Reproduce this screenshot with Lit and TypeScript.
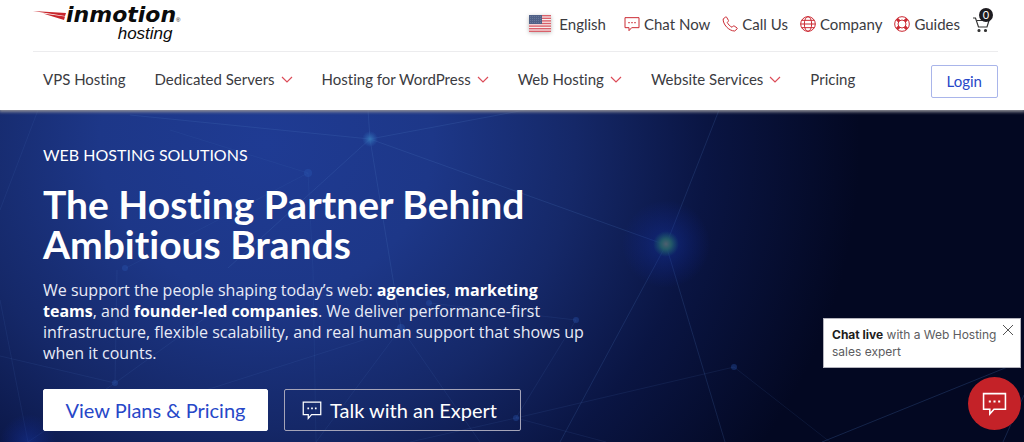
import { LitElement, html, css, svg } from "lit";
import { customElement, state } from "lit/decorators.js";

const bubble = (cls: string) => html`
  <svg class=${cls} viewBox="0 0 24 24" fill="none" stroke="currentColor" stroke-width="1.5" aria-hidden="true">
    <path d="M1.5 2.5h21v15H11.500L7.500 22v-4.500h-6z" />
    <path d="M6.500 10h2M11 10h2M15.500 10h2" stroke-width="2" />
  </svg>`;

const phone = html`
  <svg class="icon" viewBox="0 0 24 24" fill="none" stroke="currentColor" stroke-width="1.500" aria-hidden="true">
    <path d="M5.500 1.500 1.800 4.400C1 12 10 22.500 19 22.500l3.700-3.200c.4-.5.300-1-.2-1.400l-4.300-3c-.5-.3-1-.2-1.400.2l-1.700 1.800C12 15.500 9 12.300 7.900 9.600l1.600-1.700c.4-.4.400-.9.100-1.400L6.900 1.800c-.3-.5-.9-.7-1.400-.3z" />
  </svg>`;

const globe = html`
  <svg class="icon" viewBox="0 0 24 24" fill="none" stroke="currentColor" stroke-width="1.500" aria-hidden="true">
    <circle cx="12" cy="12" r="11" />
    <ellipse cx="12" cy="12" rx="5.500" ry="11" />
    <path d="M1 12h22M2.500 6.500h19M2.500 17.500h19" />
  </svg>`;

const lifebuoy = html`
  <svg class="icon" viewBox="0 0 24 24" fill="none" stroke="currentColor" stroke-width="1.500" aria-hidden="true">
    <circle cx="12" cy="12" r="11" />
    <circle cx="12" cy="12" r="6" />
    <path d="m4.500 4.500 3.500 3.500M19.500 4.500 16 8M4.500 19.500 8 16M19.500 19.500 16 16" stroke-width="4.500" />
  </svg>`;

const cart = html`
  <svg class="cart-icon" viewBox="0 0 18 18" fill="none" stroke="#333" stroke-width="1.200" aria-hidden="true">
    <path d="M1 3h2.500l3 9h8.500l2-6.500H5" />
    <circle cx="7" cy="15.500" r="1" fill="#333" />
    <circle cx="13.500" cy="15.500" r="1" fill="#333" />
  </svg>`;

const chevron = html`
  <svg class="chevron" viewBox="0 0 12 7" fill="none" stroke="currentColor" stroke-width="1.200" aria-hidden="true">
    <path d="m1 1 5 5 5-5" />
  </svg>`;

const flag = html`
  <svg class="flag" viewBox="0 0 22 17" aria-hidden="true">
    <rect width="22" height="17" fill="#f7eeee" />
    ${[0, 1, 2, 3, 4, 5, 6].map((i) => svg`<rect y=${i * 2.6} width="22" height="1.400" fill="#d9606a" />`)}
    <rect width="13" height="9" fill="#506187" />
    ${[1, 3, 5, 7].map((y) => svg`<path d="M1 ${y + 0.5}h11" stroke="#8491ad" stroke-width=".6" stroke-dasharray=".8 1.200" />`)}
  </svg>`;

@customElement("app-root")
export class AppRoot extends LitElement {
  @state() private noteOpen = true;

  static styles = css`
    :host {
      display: block;
      font-family: Lato, "Liberation Sans", sans-serif;
      font-variant-ligatures: none;
      color: #3b3b3f;
    }
    * { box-sizing: border-box; }
    a { color: inherit; text-decoration: none; }
    svg { flex: none; display: block; }
    button { font: inherit; cursor: pointer; }

    header { position: relative; z-index: 1; background: #fff; box-shadow: 0 1px 3px 1px #8d8d96; }
    .topbar {
      display: flex;
      justify-content: space-between;
      height: 52px;
      margin: 0 26px 0 33px;
      border-bottom: 1px solid #ececee;
    }
    .logo { display: flex; align-items: flex-start; padding-top: 5px; color: #0b0b0b; font-style: italic; }
    .swoosh { width: 33px; height: 9px; margin-top: 6px; }
    .words { display: flex; flex-direction: column; align-items: flex-end; }
    .brand { display: flex; align-items: flex-end; font: italic bold 22px/20px "DejaVu Sans", sans-serif; }
    .brand small { font: 6px/10px "Liberation Sans", sans-serif; }
    .sub { font: italic 17px/17px "Liberation Sans", sans-serif; padding-right: 8px; }

    .tools { display: flex; align-items: center; gap: 12px; padding: 0 8px 4px 0; font-size: 15px; }
    .tools a { display: flex; align-items: center; gap: 4px; }
    .tools .lang { gap: 8px; margin-right: 6px; }
    .flag { width: 22px; height: 17px; box-shadow: 0 1px 4px #bbb; }
    .icon { width: 16px; height: 16px; color: #cb2a33; }
    .cart { position: relative; }
    .cart-icon { width: 18px; height: 18px; }
    .badge {
      position: absolute;
      top: -7px;
      right: -3px;
      width: 14px;
      height: 14px;
      border-radius: 50%;
      background: #1d1b20;
      color: #fff;
      font-size: 11px;
      line-height: 14px;
      text-align: center;
    }

    nav { display: flex; align-items: center; justify-content: space-between; height: 58px; padding: 0 26px 0 43px; }
    .menu { display: flex; gap: 29px; margin: 0; padding: 0 0 4px; list-style: none; font-size: 15px; }
    .menu a { display: flex; align-items: center; gap: 6px; white-space: nowrap; }
    .chevron { width: 12px; height: 7px; color: #dc4c58; }
    .login {
      padding: 0 15px;
      border: 1px solid #a9b5ea;
      border-radius: 2px;
      color: #2747c8;
      font-size: 15px;
      line-height: 31px;
    }

    .hero {
      position: relative;
      min-height: 332px;
      padding: 34px 43px 11px;
      overflow: hidden;
      color: #fff;
      background:
        radial-gradient(ellipse 58% 165% at 26% 10%, #1f3b93 0%, #1d3788 28%, #152868 52%, #0a1543 74%, #030822 100%);
    }
    .mesh { position: absolute; inset: 0; width: 100%; height: 100%; }
    .copy { position: relative; display: flex; flex-direction: column; align-items: flex-start; }
    .eyebrow { margin: 0; font-size: 16px; line-height: 22px; }
    h1 { margin: 18px 0 0; font-size: 39px; line-height: 40px; font-weight: 700; }
    .lead { margin: 16px 0 0; font-family: "Open Sans", sans-serif; font-size: 16px; line-height: 21px; color: #e8ebf7; }
    .lead strong { color: #fff; }
    .actions { display: flex; gap: 16px; margin-top: 25px; }
    .btn {
      display: flex;
      align-items: center;
      justify-content: center;
      gap: 8px;
      min-width: 225px;
      height: 42px;
      padding: 0 23px 0 17px;
      border: 1px solid #a5a4b8;
      border-radius: 2px;
      font-size: 20px;
    }
    .btn.primary { padding: 0 20px; border-color: #fff; background: #fff; color: #2747c8; }
    .btn-icon { width: 20px; height: 20px; }

    .chat { position: fixed; right: 3px; bottom: 12px; z-index: 2; display: flex; flex-direction: column; align-items: flex-end; gap: 9px; }
    .note {
      display: flex;
      align-items: flex-start;
      width: 198px;
      padding: 7px 7px 7px 8px;
      border: 1px solid #b4b4bd;
      background: #fff;
      color: #5c5c60;
      font: 12px/17px Inter, sans-serif;
    }
    .note p { flex: 1; margin: 0; }
    .note strong { color: #1d1d20; }
    .close { width: 10px; height: 10px; margin-top: -1px; padding: 0; border: 0; background: none; color: #555; }
    .fab {
      display: grid;
      place-items: center;
      width: 53px;
      height: 53px;
      padding: 0;
      border: 0;
      border-radius: 50%;
      background: #c42228;
      color: #fff;
    }
    .fab-icon { width: 25px; height: 25px; }
  `;

  private menuItem(label: string, sub = false) {
    return html`<li><a href="#">${label}${sub ? chevron : null}</a></li>`;
  }

  render() {
    return html`
      <header>
        <div class="topbar">
          <a class="logo" href="#" aria-label="InMotion Hosting">
            <svg class="swoosh" viewBox="0 0 33 9" aria-hidden="true">
              <path d="M0 0 33 2 32 5z" fill="#c8262c" />
              <path d="M10 2.500 32 5.500 31 9z" fill="#c8262c" />
            </svg>
            <span class="words">
              <span class="brand">inmotion<small>®</small></span>
              <span class="sub">hosting</span>
            </span>
          </a>
          <div class="tools">
            <a class="lang" href="#">${flag}English</a>
            <a href="#">${bubble("icon")}Chat Now</a>
            <a href="#">${phone}Call Us</a>
            <a href="#">${globe}Company</a>
            <a href="#">${lifebuoy}Guides</a>
            <a class="cart" href="#" aria-label="Cart">${cart}<span class="badge">0</span></a>
          </div>
        </div>
        <nav>
          <ul class="menu">
            ${this.menuItem("VPS Hosting")}
            ${this.menuItem("Dedicated Servers", true)}
            ${this.menuItem("Hosting for WordPress", true)}
            ${this.menuItem("Web Hosting", true)}
            ${this.menuItem("Website Services", true)}
            ${this.menuItem("Pricing")}
          </ul>
          <a class="login" href="#">Login</a>
        </nav>
      </header>

      <section class="hero">
        <svg class="mesh" viewBox="0 0 1024 332" preserveAspectRatio="xMinYMin slice" aria-hidden="true">
          <defs>
            <radialGradient id="glow">
              <stop offset="0" stop-color="#1635a0" stop-opacity=".5" />
              <stop offset="1" stop-color="#1028a0" stop-opacity="0" />
            </radialGradient>
            <radialGradient id="core">
              <stop offset="0" stop-color="#4d6070" />
              <stop offset=".4" stop-color="#245a68" />
              <stop offset="1" stop-color="#14506a" stop-opacity="0" />
            </radialGradient>
            <radialGradient id="star">
              <stop offset="0" stop-color="#3473b4" />
              <stop offset="1" stop-color="#2a62b4" stop-opacity="0" />
            </radialGradient>
          </defs>
          <g fill="none" stroke="#4f7fc4" stroke-opacity=".2">
            <path d="M368 0 370 29 525 0M370 29 130 5M370 29 666 135M370 29 228 158M370 29 401 218M666 135 719 0M666 135 560 332M666 135 725 332" />
            <path d="M308 63 170 20M308 63 126 158M308 63 313 160 316 332" stroke-opacity=".1" />
            <path d="M38 0 0 100M0 190 28 332M28 332 115 273 117 160M115 273 0 246M115 273 230 190M401 218 316 332M401 218 480 332M576 210 429 193M576 210 516 308M401 218 206 280M516 308 606 332M516 308 410 332M516 308 734 257 830 332" stroke-opacity=".12" />
            <path d="M822 332 1010 256M1024 285 1003 332" stroke-opacity=".24" />
          </g>
          <g fill="#2c58b4" fill-opacity=".35">
            <circle cx="308" cy="63" r="4" />
            <circle cx="115" cy="273" r="3" />
            <circle cx="401" cy="218" r="4" />
            <circle cx="429" cy="193" r="3" />
            <circle cx="576" cy="210" r="3" />
            <circle cx="516" cy="308" r="3" />
            <circle cx="734" cy="257" r="3" />
            <circle cx="125" cy="158" r="3" />
          </g>
          <circle cx="370" cy="29" r="8" fill="url(#star)" />
          <circle cx="28" cy="332" r="28" fill="url(#glow)" />
          <circle cx="666" cy="134" r="44" fill="url(#glow)" />
          <circle cx="666" cy="134" r="13" fill="url(#core)" />
        </svg>
        <div class="copy">
          <p class="eyebrow">WEB HOSTING SOLUTIONS</p>
          <h1>The Hosting Partner Behind<br />Ambitious Brands</h1>
          <p class="lead">
            We support the people shaping today’s web: <strong>agencies</strong>, <strong>marketing</strong><br />
            <strong>teams</strong>, and <strong>founder-led companies</strong>. We deliver performance-first<br />
            infrastructure, flexible scalability, and real human support that shows up<br />
            when it counts.
          </p>
          <div class="actions">
            <a class="btn primary" href="#">View Plans &amp; Pricing</a>
            <a class="btn" href="#">${bubble("btn-icon")}Talk with an Expert</a>
          </div>
        </div>
      </section>

      <aside class="chat">
        ${this.noteOpen
          ? html`<div class="note">
              <p><strong>Chat live</strong> with a Web Hosting sales expert</p>
              <button class="close" aria-label="Close" @click=${() => (this.noteOpen = false)}>
                <svg viewBox="0 0 10 10" width="10" height="10" stroke="currentColor" aria-hidden="true"><path d="m0 0 10 10M10 0 0 10" /></svg>
              </button>
            </div>`
          : null}
        <button class="fab" aria-label="Open chat">${bubble("fab-icon")}</button>
      </aside>
    `;
  }
}
